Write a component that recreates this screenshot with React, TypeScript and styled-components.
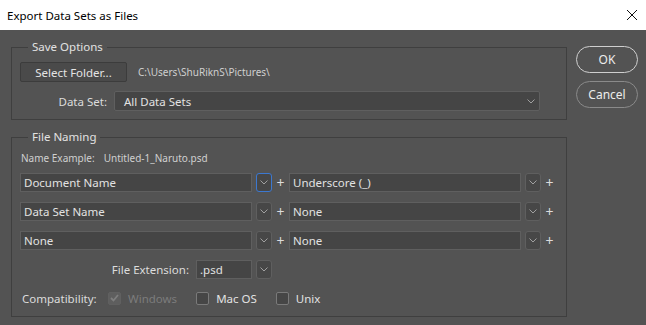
import React from "react";
import styled, { createGlobalStyle, css } from "styled-components";

const GlobalStyle = createGlobalStyle`
  html, body {
    margin: 0;
    padding: 0;
    background: #535353;
  }
  body {
    font-family: "Noto Sans", "Segoe UI", "Liberation Sans", sans-serif;
    font-size: 11.5px;
  }
`;

const Chevron: React.FC = () => (
  <svg width="8" height="5" viewBox="0 0 8 5">
    <polyline points="0.5,0.5 4,4 7.5,0.5" fill="none" stroke="#a0a0a0" strokeWidth="1" />
  </svg>
);

const CheckMark: React.FC = () => (
  <svg width="9" height="8" viewBox="0 0 9 8">
    <polyline points="1,4 3.5,6.5 8,1" fill="none" stroke="#7e7e7e" strokeWidth="1.8" />
  </svg>
);

const namingRows = [
  { first: "Document Name", second: "Underscore (_)", focused: true },
  { first: "Data Set Name", second: "None", focused: false },
  { first: "None", second: "None", focused: false },
];

const App: React.FC = () => {
  return (
    <Window>
      <GlobalStyle />
      <TitleBar>
        <Title>Export Data Sets as Files</Title>
        <CloseIcon>
          <svg width="12" height="12" viewBox="0 0 12 12">
            <path d="M1 1 L11 11 M11 1 L1 11" stroke="#111" strokeWidth="1" />
          </svg>
        </CloseIcon>
      </TitleBar>
      <Body>
        <Groups>
          <Group>
            <Legend>Save Options</Legend>
            <FolderRow>
              <FolderButton>Select Folder...</FolderButton>
              <PathText>C:\Users\ShuRiknS\Pictures\</PathText>
            </FolderRow>
            <Row>
              <Label width={90}>Data Set:</Label>
              <Select width={426}>
                <span>All Data Sets</span>
                <Chevron />
              </Select>
            </Row>
          </Group>

          <Group second>
            <Legend>File Naming</Legend>
            <Example>
              <span>Name Example:</span>
              <span>Untitled-1_Naruto.psd</span>
            </Example>
            <NamingRows>
              {namingRows.map((row, i) => (
                <Row key={i}>
                  <Field width={232}>{row.first}</Field>
                  <DropButton focused={row.focused}>
                    <Chevron />
                  </DropButton>
                  <Plus>+</Plus>
                  <Field width={232}>{row.second}</Field>
                  <DropButton>
                    <Chevron />
                  </DropButton>
                  <Plus>+</Plus>
                </Row>
              ))}
              <Row>
                <Label width={172}>File Extension:</Label>
                <Field width={56}>.psd</Field>
                <DropButton>
                  <Chevron />
                </DropButton>
              </Row>
              <CompatRow>
                <CompatLabel>Compatibility:</CompatLabel>
                <CheckItem disabled>
                  <Box disabled>
                    <CheckMark />
                  </Box>
                  Windows
                </CheckItem>
                <CheckItem>
                  <Box />
                  Mac OS
                </CheckItem>
                <CheckItem>
                  <Box />
                  Unix
                </CheckItem>
              </CompatRow>
            </NamingRows>
          </Group>
        </Groups>

        <Actions>
          <PillButton primary>OK</PillButton>
          <PillButton>Cancel</PillButton>
        </Actions>
      </Body>
    </Window>
  );
};

const Window = styled.div`
  width: 646px;
  height: 325px;
  display: flex;
  flex-direction: column;
  background: #535353;
  overflow: hidden;
`;

const TitleBar = styled.div`
  height: 30px;
  flex: none;
  box-sizing: border-box;
  background: #ffffff;
  display: flex;
  align-items: center;
  justify-content: space-between;
  padding: 0 8px 0 7px;
`;

const Title = styled.div`
  color: #000;
  font-size: 11.5px;
`;

const CloseIcon = styled.div`
  display: flex;
  align-items: center;
`;

const Body = styled.div`
  flex: 1;
  display: flex;
  gap: 9px;
  padding: 9px 8px 0 11px;
`;

const Groups = styled.div`
  width: 556px;
  flex: none;
  display: flex;
  flex-direction: column;
`;

const Group = styled.fieldset<{ second?: boolean }>`
  margin: 0;
  padding: 7px 8px 8px 8px;
  border: 1px solid #3f3f3f;
  min-width: 0;
  ${(p) =>
    p.second &&
    css`
      margin-top: 9px;
      padding-top: 6px;
      padding-bottom: 9px;
    `}
`;

const Legend = styled.legend`
  margin-left: 8px;
  padding: 0 4px;
  color: #e2e2e2;
  font-size: 11.5px;
  line-height: 16px;
`;

const FolderRow = styled.div`
  display: flex;
  align-items: center;
  gap: 11px;
  margin-bottom: 9px;
`;

const FolderButton = styled.div`
  width: 107px;
  height: 20px;
  box-sizing: border-box;
  display: flex;
  align-items: center;
  justify-content: center;
  background: #4a4a4a;
  border: 1px solid #3c3c3c;
  border-radius: 2px;
  color: #e4e4e4;
`;

const PathText = styled.div`
  color: #cfcfcf;
  font-size: 10px;
`;

const Row = styled.div`
  display: flex;
  align-items: center;
  gap: 4px;
`;

const Label = styled.div<{ width: number }>`
  width: ${(p) => p.width}px;
  flex: none;
  text-align: right;
  padding-right: 3px;
  box-sizing: border-box;
  color: #dcdcdc;
`;

const Select = styled.div<{ width: number }>`
  width: ${(p) => p.width}px;
  height: 20px;
  box-sizing: border-box;
  display: flex;
  align-items: center;
  justify-content: space-between;
  padding: 0 4px 0 9px;
  background: #454545;
  border: 1px solid #5f5f5f;
  border-radius: 2px;
  color: #e2e2e2;
`;

const Example = styled.div`
  display: flex;
  gap: 9px;
  color: #d0d0d0;
  font-size: 10px;
  line-height: 14px;
  margin: 0 0 8px 1px;
`;

const NamingRows = styled.div`
  display: flex;
  flex-direction: column;
  gap: 10px;
`;

const Field = styled.div<{ width: number }>`
  width: ${(p) => p.width}px;
  height: 19px;
  flex: none;
  box-sizing: border-box;
  display: flex;
  align-items: center;
  padding: 0 3px;
  background: #454545;
  border: 1px solid #5f5f5f;
  color: #e2e2e2;
`;

const DropButton = styled.div<{ focused?: boolean }>`
  width: 16px;
  height: 19px;
  flex: none;
  box-sizing: border-box;
  display: flex;
  align-items: center;
  justify-content: center;
  background: #474747;
  border: 1px solid ${(p) => (p.focused ? "#3c78d0" : "#5f5f5f")};
  border-radius: 3px;
`;

const Plus = styled.div`
  width: 9px;
  flex: none;
  text-align: center;
  color: #dcdcdc;
  font-size: 14px;
  line-height: 19px;
`;

const CompatRow = styled.div`
  display: flex;
  align-items: center;
  height: 18px;
  padding-left: 2px;
  color: #dcdcdc;
`;

const CompatLabel = styled.div`
  width: 86px;
`;

const CheckItem = styled.div<{ disabled?: boolean }>`
  display: flex;
  align-items: center;
  gap: 7px;
  margin-right: 19px;
  color: ${(p) => (p.disabled ? "#7c7c7c" : "#e2e2e2")};
`;

const Box = styled.div<{ disabled?: boolean }>`
  width: 13px;
  height: 13px;
  box-sizing: border-box;
  display: flex;
  align-items: center;
  justify-content: center;
  border: 1px solid ${(p) => (p.disabled ? "#606060" : "#7a7a7a")};
  background: ${(p) => (p.disabled ? "#5e5e5e" : "#464646")};
  border-radius: 2px;
`;

const Actions = styled.div`
  display: flex;
  flex-direction: column;
  gap: 8px;
  padding-top: 7px;
`;

const PillButton = styled.div<{ primary?: boolean }>`
  width: 62px;
  height: 27px;
  box-sizing: border-box;
  display: flex;
  align-items: center;
  justify-content: center;
  border: 1.5px solid ${(p) => (p.primary ? "#cfcfcf" : "#8a8a8a")};
  border-radius: 14px;
  color: #ececec;
  font-size: 12px;
`;

export default App;
